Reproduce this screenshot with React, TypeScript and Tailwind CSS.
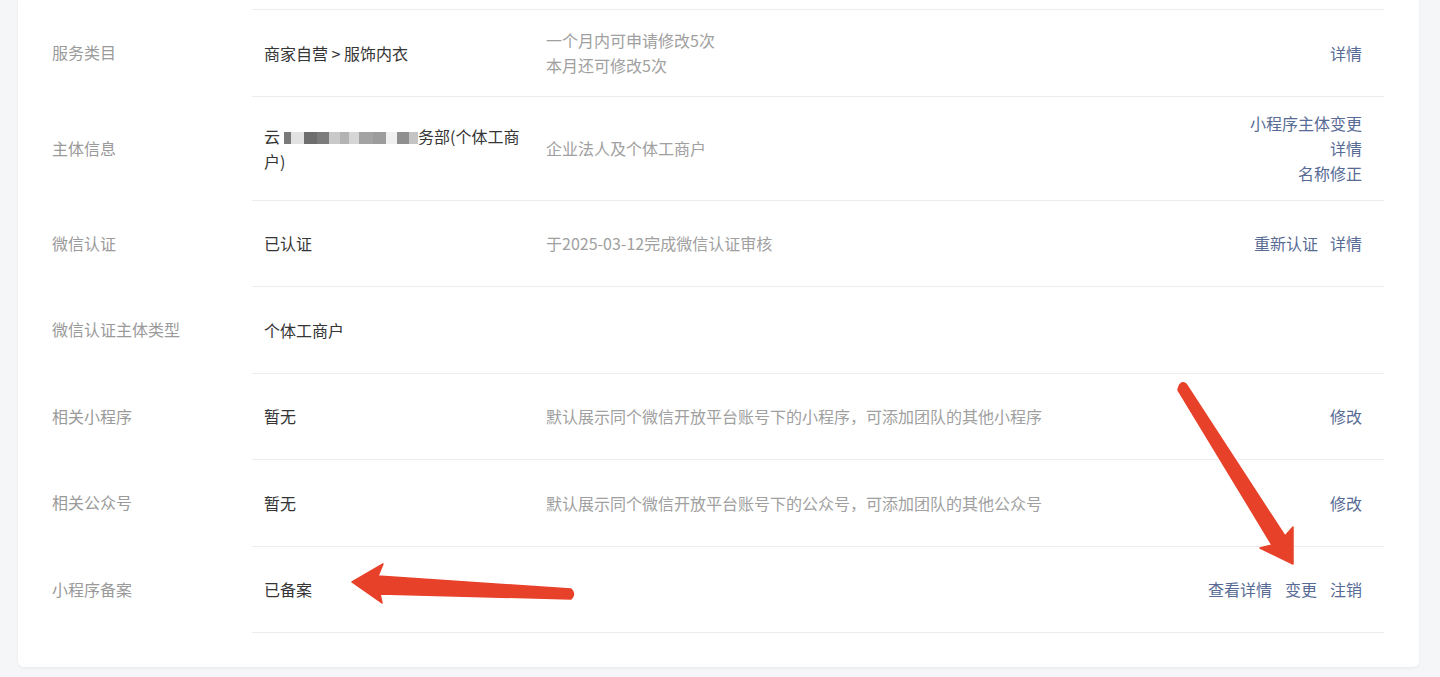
import React from "react";

const FONT = { fontFamily: '"Noto Sans CJK SC", "Noto Sans", sans-serif' };

function Link({ children }: { children: React.ReactNode }) {
  return <span className="text-[#576b95] whitespace-nowrap">{children}</span>;
}

const mosaic: [number, string][] = [
  [4, "#ffffff"],
  [7, "#7a7a7a"],
  [13, "#e2e2e2"],
  [13, "#6e6e6e"],
  [12, "#7c7c7c"],
  [11, "#c9c9c9"],
  [9, "#b3b3b3"],
  [10, "#d6d6d6"],
  [14, "#a3a3a3"],
  [13, "#9c9c9c"],
  [11, "#f0f0f0"],
  [12, "#8f8f8f"],
  [9, "#c4c4c4"],
];

function Mosaic() {
  return (
    <span className="inline-flex h-[12px] align-[-1px]">
      {mosaic.map(([w, c], i) => (
        <span key={i} className="h-full inline-block" style={{ width: w, background: c }} />
      ))}
    </span>
  );
}

type Row = {
  label: string;
  h: string;
  value?: React.ReactNode;
  desc?: React.ReactNode;
  actions?: React.ReactNode;
};

const rows: Row[] = [
  {
    label: "服务类目",
    h: "h-[87px]",
    value: "商家自营 > 服饰内衣",
    desc: (
      <>
        <div>一个月内可申请修改5次</div>
        <div>本月还可修改5次</div>
      </>
    ),
    actions: <Link>详情</Link>,
  },
  {
    label: "主体信息",
    h: "h-[104px]",
    value: (
      <>
        云<Mosaic />务部(个体工商
        <br />
        户)
      </>
    ),
    desc: "企业法人及个体工商户",
    actions: (
      <div className="flex flex-col items-end">
        <Link>小程序主体变更</Link>
        <Link>详情</Link>
        <Link>名称修正</Link>
      </div>
    ),
  },
  {
    label: "微信认证",
    h: "h-[86px]",
    value: "已认证",
    desc: "于2025-03-12完成微信认证审核",
    actions: (
      <div className="flex gap-3">
        <Link>重新认证</Link>
        <Link>详情</Link>
      </div>
    ),
  },
  {
    label: "微信认证主体类型",
    h: "h-[87px]",
    value: "个体工商户",
  },
  {
    label: "相关小程序",
    h: "h-[86px]",
    value: "暂无",
    desc: "默认展示同个微信开放平台账号下的小程序，可添加团队的其他小程序",
    actions: <Link>修改</Link>,
  },
  {
    label: "相关公众号",
    h: "h-[87px]",
    value: "暂无",
    desc: "默认展示同个微信开放平台账号下的公众号，可添加团队的其他公众号",
    actions: <Link>修改</Link>,
  },
  {
    label: "小程序备案",
    h: "h-[87px]",
    value: "已备案",
    actions: (
      <div className="flex gap-[13px]">
        <Link>查看详情</Link>
        <Link>变更</Link>
        <Link>注销</Link>
      </div>
    ),
  },
];

export default function App() {
  return (
    <div className="relative w-[1440px] h-[677px] overflow-hidden bg-[#f5f6f8]" style={FONT}>
      <div className="mx-[18px] w-[1401px] bg-white rounded-b-[6px] shadow-[0_1px_3px_rgba(0,0,0,0.06)] pl-[34px] pr-[35px] pt-[9px] pb-[34px] text-[16px] leading-[25px]">
        {rows.map((r, i) => (
          <div key={i} className={`flex ${r.h}`}>
            <div className="w-[200px] shrink-0 flex items-center text-[#9a9a9a]">{r.label}</div>
            <div
              className={`flex-1 flex items-center border-t border-[#ececec] ${
                i === rows.length - 1 ? "border-b" : ""
              }`}
            >
              <div className="w-[294px] shrink-0 pl-3 pr-3 text-[#353535]">{r.value}</div>
              <div className="flex-1 text-[#a0a0a0]">{r.desc}</div>
              <div className="pr-[22px] text-right">{r.actions}</div>
            </div>
          </div>
        ))}
      </div>

      <svg className="absolute left-0 top-0 pointer-events-none" width="1440" height="677" viewBox="0 0 1440 677">
        <path
          d="M352 582 L383 564 L378 576 L571 589 Q576 594 571 599 L380 594 L382 603 Z"
          fill="#e8412a"
          stroke="#e8412a"
          strokeWidth="1.5"
          strokeLinejoin="round"
        />
        <path
          d="M1178 390 L1272 545 L1260 548 L1293 564 L1293 527 L1285 536 L1186 384 Q1180 380 1178 390 Z"
          fill="#e8412a"
          stroke="#e8412a"
          strokeWidth="1.5"
          strokeLinejoin="round"
        />
      </svg>
    </div>
  );
}
